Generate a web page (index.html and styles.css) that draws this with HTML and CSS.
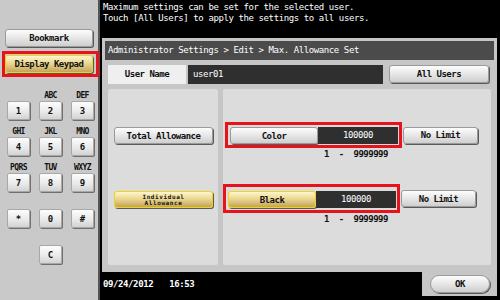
FILE: index.html
```html
<!DOCTYPE html>
<html lang="en">

<head>
    <meta charset="UTF-8">
    <meta name="viewport" content="width=device-width, initial-scale=1.0">
    <title>Max. Allowance Set</title>
    <link rel="stylesheet" href="styles.css">
</head>

<body>
    <div class="screen">
        <aside class="sidebar">
            <button class="btn side-btn">Bookmark</button>
            <div class="mark side-mark">
                <button class="btn btn-yellow side-btn">Display Keypad</button>
            </div>

            <div class="keypad">
                <div class="key-cell"><span class="key-label"></span><button class="key">1</button></div>
                <div class="key-cell"><span class="key-label">ABC</span><button class="key">2</button></div>
                <div class="key-cell"><span class="key-label">DEF</span><button class="key">3</button></div>
                <div class="key-cell"><span class="key-label">GHI</span><button class="key">4</button></div>
                <div class="key-cell"><span class="key-label">JKL</span><button class="key">5</button></div>
                <div class="key-cell"><span class="key-label">MNO</span><button class="key">6</button></div>
                <div class="key-cell"><span class="key-label">PQRS</span><button class="key">7</button></div>
                <div class="key-cell"><span class="key-label">TUV</span><button class="key">8</button></div>
                <div class="key-cell"><span class="key-label">WXYZ</span><button class="key">9</button></div>
                <div class="key-cell"><span class="key-label"></span><button class="key">*</button></div>
                <div class="key-cell"><span class="key-label"></span><button class="key">0</button></div>
                <div class="key-cell"><span class="key-label"></span><button class="key">#</button></div>
                <div class="key-cell key-clear"><span class="key-label"></span><button class="key">C</button></div>
            </div>
        </aside>

        <main class="main">
            <div class="message">
                Maximum settings can be set for the selected user.<br>
                Touch [All Users] to apply the settings to all users.
            </div>

            <section class="frame">
                <div class="crumbs">Administrator Settings &gt; Edit &gt; Max. Allowance Set</div>

                <div class="user-row">
                    <div class="user-label">User Name</div>
                    <div class="field user-field">user01</div>
                    <button class="btn all-users">All Users</button>
                </div>

                <div class="panels">
                    <div class="panel panel-left">
                        <button class="btn mode-btn total-btn">Total Allowance</button>
                        <button class="btn btn-yellow mode-btn indiv-btn"><span>Individual<br>Allowance</span></button>
                    </div>

                    <div class="panel panel-right">
                        <div class="limit-row color-row">
                            <div class="mark limit-mark">
                                <button class="btn limit-btn">Color</button>
                                <div class="field limit-field">100000</div>
                            </div>
                            <button class="btn nolimit-btn">No Limit</button>
                        </div>
                        <div class="range">1  -  9999999</div>

                        <div class="limit-row black-row">
                            <div class="mark limit-mark mark-tall">
                                <button class="btn btn-yellow limit-btn">Black</button>
                                <div class="field limit-field">100000</div>
                            </div>
                            <button class="btn nolimit-btn">No Limit</button>
                        </div>
                        <div class="range">1  -  9999999</div>
                    </div>
                </div>
            </section>

            <footer class="status">
                <div class="clock"><span>09/24/2012</span><span>16:53</span></div>
                <div class="ok-tab"><button class="btn ok-btn">OK</button></div>
            </footer>
        </main>
    </div>
</body>

</html>
```

FILE: styles.css
```css
body {
    margin: 0;
    background-color: #000;
    font-family: "DejaVu Sans Mono", "Liberation Mono", monospace;
    font-size: 9px;
    letter-spacing: -0.4px;
    color: #111;
}

.screen {
    display: grid;
    grid-template-columns: 100px 1fr;
    width: 500px;
    height: 300px;
    overflow: hidden;
}

/* left side: bookmark + keypad */

.sidebar {
    background-color: #c9c9c9;
    border-right: 2px solid #555;
    padding-left: 5px;
}

.btn {
    display: flex;
    align-items: center;
    justify-content: center;
    padding: 0;
    font-family: inherit;
    font-size: 9px;
    font-weight: bold;
    letter-spacing: -0.5px;
    color: #111;
    background: linear-gradient(#fdfdfd, #e4e4e4 55%, #cfcfcf);
    border: 1px solid #9a9a9a;
    border-radius: 3px;
    box-shadow: 1px 1px 0 #5a5a5a;
    box-sizing: border-box;
}

.btn-yellow {
    background: linear-gradient(#fff6c8, #e8d48e 50%, #c2a458);
    border-color: #f2d31c;
}

.side-btn {
    width: 88px;
    height: 18px;
}

.sidebar > .side-btn {
    margin-top: 29px;
}

.mark {
    border: 3px solid #e8121a;
    box-sizing: border-box;
}

.side-mark {
    width: 97px;
    height: 26px;
    margin: 4px 0 0 -3px;
    padding-top: 1px;
}

.keypad {
    display: grid;
    grid-template-columns: repeat(3, 23px);
    column-gap: 9px;
    row-gap: 8px;
    margin: 15px 0 0 2px;
}

.key-cell {
    display: flex;
    flex-direction: column;
    align-items: center;
}

.key-clear {
    grid-column: 2;
}

.key-label {
    height: 9px;
    font-size: 8px;
    font-weight: bold;
    letter-spacing: -0.6px;
    line-height: 8px;
    color: #111;
}

.key {
    width: 23px;
    height: 19px;
    padding: 0;
    font-family: inherit;
    font-size: 9px;
    font-weight: bold;
    color: #111;
    background: linear-gradient(#fdfdfd, #e8e8e8 60%, #d2d2d2);
    border: 1px solid #a8a8a8;
    border-radius: 2px;
    box-shadow: 1px 1px 0 #707070;
}

/* right side */

.main {
    display: flex;
    flex-direction: column;
    padding: 0 3px 0 2px;
}

.message {
    height: 38px;
    box-sizing: border-box;
    padding: 2px 0 0 1px;
    line-height: 11px;
    color: #fff;
}

.frame {
    height: 234px;
    box-sizing: border-box;
    padding: 3px 3px 0;
    background-color: #c6c6c6;
}

.crumbs {
    height: 19px;
    line-height: 19px;
    padding-left: 3px;
    background-color: #4b4b4b;
    color: #fff;
}

.user-row {
    display: flex;
    height: 19px;
    margin: 5px 3px 0;
}

.user-label {
    width: 78px;
    line-height: 19px;
    text-align: center;
    font-weight: bold;
    letter-spacing: -0.5px;
    background-color: #efefef;
}

.field {
    background-color: #2f2f2f;
    color: #fff;
    line-height: 17px;
}

.user-field {
    width: 195px;
    margin-left: 2px;
    padding-left: 5px;
    box-sizing: border-box;
    line-height: 19px;
}

.all-users {
    width: 100px;
    height: 18px;
    margin-left: 6px;
}

.panels {
    display: grid;
    grid-template-columns: 110px 1fr;
    column-gap: 5px;
    height: 176px;
    margin: 5px 3px 0;
}

.panel {
    background-color: #dcdcdc;
    border-radius: 2px;
}

.panel-left {
    display: flex;
    flex-direction: column;
    padding: 0 5px 0 6px;
}

.mode-btn {
    width: 99px;
    height: 17px;
}

.total-btn {
    margin-top: 38px;
}

.indiv-btn {
    margin-top: 47px;
    font-size: 6px;
    letter-spacing: 0.6px;
    line-height: 6px;
    text-align: center;
}

.limit-row {
    display: flex;
    align-items: center;
}

.color-row {
    margin-top: 33px;
    padding-left: 2px;
}

.black-row {
    margin-top: 24px;
}

.limit-mark {
    display: flex;
    height: 26px;
    padding: 2px 1px 1px 2px;
}

.mark-tall {
    height: 29px;
    padding: 4px 1px 2px 2px;
}

.limit-btn {
    width: 88px;
    height: 17px;
}

.limit-field {
    width: 80px;
    height: 17px;
    text-align: center;
}

.nolimit-btn {
    width: 75px;
    height: 17px;
    margin-left: 1px;
}

.range {
    height: 12px;
    line-height: 12px;
    padding-left: 101px;
    white-space: pre;
    font-weight: bold;
    letter-spacing: -0.5px;
}

/* bottom strip */

.status {
    display: flex;
    height: 28px;
}

.clock {
    display: flex;
    gap: 16px;
    flex: 1;
    padding: 7px 0 0 1px;
    color: #fff;
    font-weight: bold;
}

.ok-tab {
    width: 75px;
    height: 24px;
    padding: 3px 0 0 8px;
    box-sizing: border-box;
    background-color: #c6c6c6;
}

.ok-btn {
    width: 60px;
    height: 18px;
    border-radius: 9px;
}
```
